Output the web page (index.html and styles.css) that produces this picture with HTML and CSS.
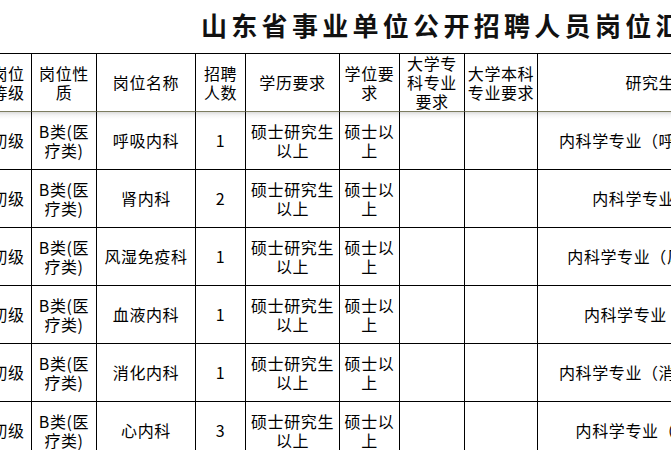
FILE: index.html
```html
<!DOCTYPE html>
<html lang="zh-CN">
<head>
<meta charset="utf-8">
<title>山东省事业单位公开招聘人员岗位汇总表</title>
<link rel="stylesheet" href="styles.css">
</head>
<body>
<div class="page">
  <h1 class="title">山东省事业单位公开招聘人员岗位汇总表</h1>
  <table class="jobs">
    <colgroup>
      <col class="c-level">
      <col class="c-type">
      <col class="c-name">
      <col class="c-count">
      <col class="c-edu">
      <col class="c-degree">
      <col class="c-college">
      <col class="c-bachelor">
      <col class="c-master">
    </colgroup>
    <thead>
      <tr>
        <th>岗位<br>等级</th>
        <th>岗位性<br>质</th>
        <th>岗位名称</th>
        <th>招聘<br>人数</th>
        <th>学历要求</th>
        <th>学位要<br>求</th>
        <th>大学专<br>科专业<br>要求</th>
        <th>大学本科<br>专业要求</th>
        <th>研究生专业要求</th>
      </tr>
    </thead>
    <tbody>
      <tr>
        <td>初级</td>
        <td>B类(医<br>疗类)</td>
        <td>呼吸内科</td>
        <td>1</td>
        <td>硕士研究生<br>以上</td>
        <td>硕士以<br>上</td>
        <td></td>
        <td></td>
        <td>内科学专业（呼吸系统疾病方向）</td>
      </tr>
      <tr>
        <td>初级</td>
        <td>B类(医<br>疗类)</td>
        <td>肾内科</td>
        <td>2</td>
        <td>硕士研究生<br>以上</td>
        <td>硕士以<br>上</td>
        <td></td>
        <td></td>
        <td>内科学专业（肾病方向）</td>
      </tr>
      <tr>
        <td>初级</td>
        <td>B类(医<br>疗类)</td>
        <td>风湿免疫科</td>
        <td>1</td>
        <td>硕士研究生<br>以上</td>
        <td>硕士以<br>上</td>
        <td></td>
        <td></td>
        <td>内科学专业（风湿免疫病方向）</td>
      </tr>
      <tr>
        <td>初级</td>
        <td>B类(医<br>疗类)</td>
        <td>血液内科</td>
        <td>1</td>
        <td>硕士研究生<br>以上</td>
        <td>硕士以<br>上</td>
        <td></td>
        <td></td>
        <td>内科学专业（血液病方向）</td>
      </tr>
      <tr>
        <td>初级</td>
        <td>B类(医<br>疗类)</td>
        <td>消化内科</td>
        <td>1</td>
        <td>硕士研究生<br>以上</td>
        <td>硕士以<br>上</td>
        <td></td>
        <td></td>
        <td>内科学专业（消化系统疾病方向）</td>
      </tr>
      <tr>
        <td>初级</td>
        <td>B类(医<br>疗类)</td>
        <td>心内科</td>
        <td>3</td>
        <td>硕士研究生<br>以上</td>
        <td>硕士以<br>上</td>
        <td></td>
        <td></td>
        <td>内科学专业（心血管病方向）</td>
      </tr>
    </tbody>
  </table>
</div>
</body>
</html>
```

FILE: styles.css
```css
html, body {
  margin: 0;
  padding: 0;
  background: #ffffff;
  overflow: hidden;
}

body {
  width: 671px;
  height: 450px;
  font-family: "Noto Sans CJK SC", "Noto Sans", sans-serif;
  color: #000000;
}

.page {
  display: flex;
  flex-direction: column;
}

.title {
  margin: 0;
  height: 53px;
  box-sizing: border-box;
  display: flex;
  align-items: center;
  padding: 0 0 4px 201px;
  font-size: 26px;
  line-height: 30px;
  letter-spacing: 4.3px;
  font-weight: 700;
  white-space: nowrap;
  color: #111111;
}

.jobs {
  margin-left: -16px;
  width: 845px;
  table-layout: fixed;
  border-collapse: separate;
  border-spacing: 0;
  border-top: 1px solid #000000;
  border-left: 1px solid #000000;
}

.c-level { width: 47px; }
.c-type { width: 65px; }
.c-name { width: 99px; }
.c-count { width: 50px; }
.c-edu { width: 94px; }
.c-degree { width: 60px; }
.c-college { width: 65px; }
.c-bachelor { width: 73px; }
.c-master { width: 292px; }

.jobs th,
.jobs td {
  box-sizing: border-box;
  height: 58px;
  padding: 0;
  border-right: 1px solid #000000;
  border-bottom: 1px solid #000000;
  text-align: center;
  vertical-align: middle;
  font-size: 16px;
  line-height: 19px;
  letter-spacing: 0.6px;
  font-weight: 400;
  white-space: nowrap;
  overflow: hidden;
}

.jobs thead th {
  border-bottom-color: #7d7d60;
}

.jobs tbody tr:first-child td {
  background: linear-gradient(to bottom, #dcdcdc 0, #f4f4f4 3px, #ffffff 7px);
}
```
